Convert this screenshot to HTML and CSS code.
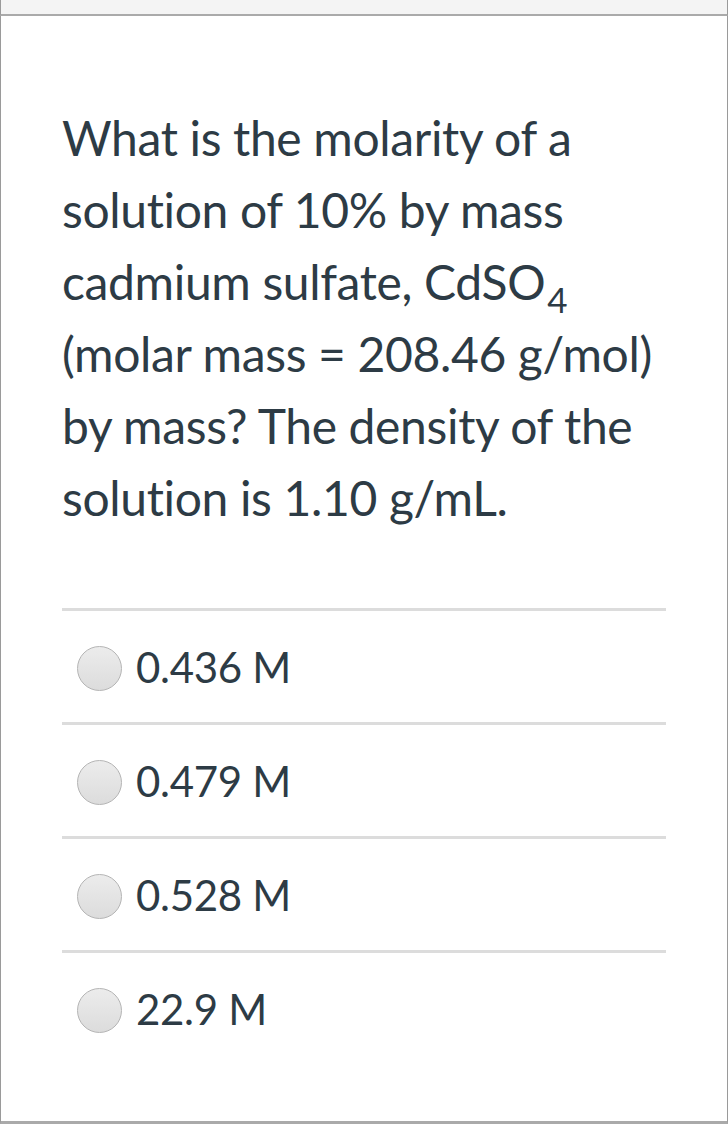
FILE: index.html
```html
<!DOCTYPE html>
<html>
<head>
<meta charset="utf-8">
<link rel="stylesheet" href="styles.css">
</head>
<body>
<div class="topband"></div>
<div class="card">
  <div class="question">What is the molarity of a solution of 10% by mass cadmium sulfate, CdSO<sub>4</sub> (molar mass = 208.46 g/mol) by mass? The density of the solution is 1.10 g/mL.</div>
  <div class="answers">
    <div class="answer"><span class="radio"></span><span class="label">0.436 M</span></div>
    <div class="answer"><span class="radio"></span><span class="label">0.479 M</span></div>
    <div class="answer"><span class="radio"></span><span class="label">0.528 M</span></div>
    <div class="answer"><span class="radio"></span><span class="label">22.9 M</span></div>
  </div>
</div>
</body>
</html>
```
FILE: styles.css
```css
html, body {
  margin: 0;
  padding: 0;
  background: #ffffff;
}
body {
  font-family: Lato, "Open Sans", sans-serif;
  color: #2d3b45;
  width: 728px;
}
.topband {
  width: 726px;
  height: 14px;
  background: #f4f4f4;
  border-left: 1px solid #9a9a9a;
  border-right: 1px solid #9a9a9a;
  border-bottom: 2px solid #aaaaaa;
}
.card {
  width: 665px;
  height: 1019px;
  border-left: 1px solid #9a9a9a;
  border-right: 1px solid #9a9a9a;
  border-bottom: 3px solid #aaaaaa;
  padding: 86px 0 0 61px;
}
.question {
  width: 604px;
  font-size: 48px;
  line-height: 72px;
  letter-spacing: -0.35px;
}
.question sub {
  font-size: 35px;
  line-height: 0;
  vertical-align: -13px;
  margin-left: 2px;
}
.answers {
  width: 604px;
  margin-top: 74px;
}
.answer {
  border-top: 3px solid #dcdcdc;
  height: 111px;
  display: flex;
  align-items: center;
  padding-left: 15px;
}
.radio {
  width: 43px;
  height: 43px;
  border-radius: 50%;
  border: 1px solid #b4b4b4;
  background: linear-gradient(#ececec, #dcdcdc);
  flex: none;
  margin-top: 4px;
}
.label {
  font-size: 42px;
  margin-left: 14px;
  letter-spacing: -0.3px;
}
```
